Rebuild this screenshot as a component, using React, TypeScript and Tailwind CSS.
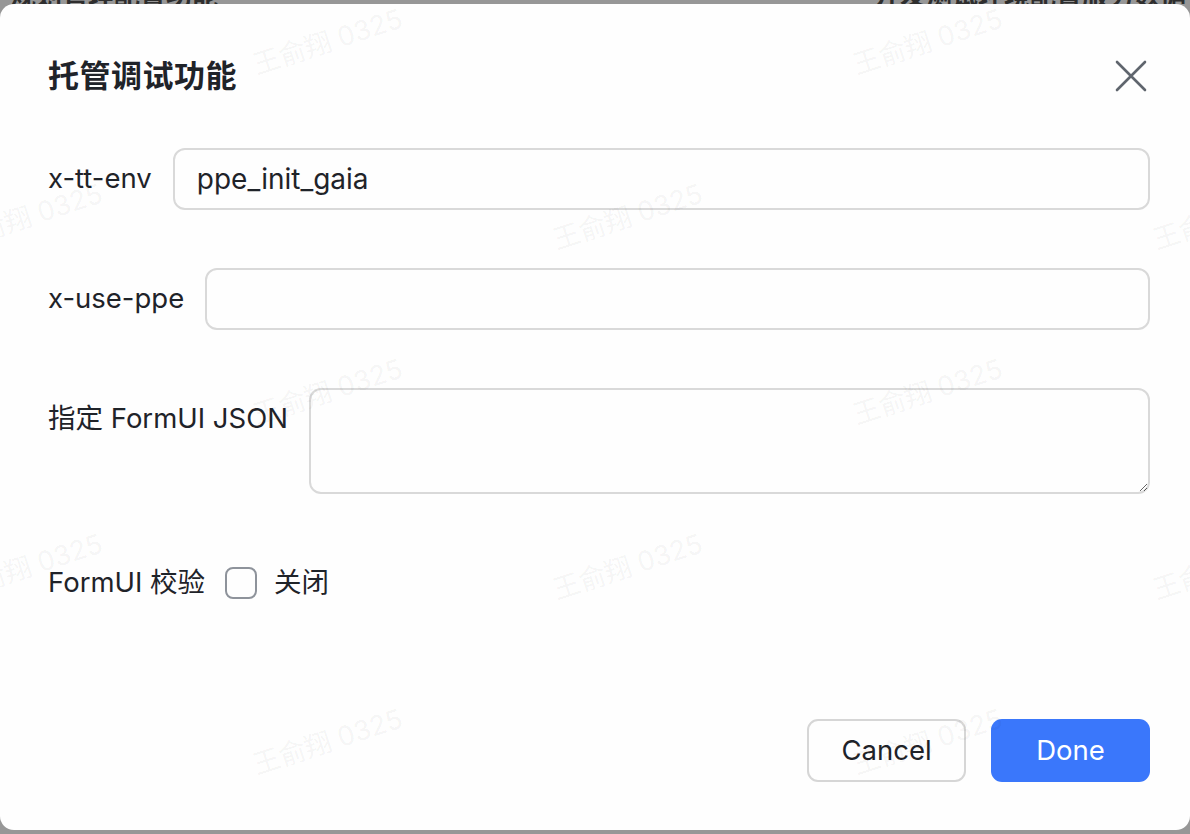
const WATERMARKS = [
  { x: 254, y: 18 },
  { x: 854, y: 18 },
  { x: -46, y: 193 },
  { x: 554, y: 193 },
  { x: 1154, y: 193 },
  { x: 254, y: 368 },
  { x: 854, y: 368 },
  { x: -46, y: 543 },
  { x: 554, y: 543 },
  { x: 1154, y: 543 },
  { x: 254, y: 718 },
  { x: 854, y: 718 },
];

const FONT = "font-['Inter','Noto_Sans_CJK_SC',sans-serif]";

const CloseIcon = () => (
  <svg width="32" height="32" viewBox="0 0 32 32" fill="none">
    <path
      d="M2 2L30 30M30 2L2 30"
      stroke="#5f656d"
      strokeWidth="2.6"
      strokeLinecap="round"
    />
  </svg>
);

const App = () => {
  return (
    <div
      className={`relative h-[834px] w-[1190px] overflow-hidden bg-[#979797] ${FONT}`}
    >
      {/* page behind the modal, only a sliver shows */}
      <div className="flex h-[4px] gap-8 overflow-hidden pl-[10px] text-[26px] font-semibold text-[#2e2e2e]">
        <span className="-mt-[24px] whitespace-nowrap">规划管理配置功能</span>
        <span className="-mt-[24px] h-[30px] w-[2px] bg-[#3b66c8]" />
        <span className="-mt-[24px] ml-[560px] h-[30px] w-[80px] bg-[#6b1a1a]" />
        <span className="-mt-[24px] whitespace-nowrap">
          开发测试环境配置服务数据管理
        </span>
      </div>

      <div className="relative flex h-[826px] flex-col overflow-hidden rounded-[14px] bg-[#fefefe] pr-10 pl-12 text-[#1f2329]">
        <div className="mt-[54px] flex h-[36px] items-center justify-between">
          <h2 className="text-[31px] font-bold leading-[36px] tracking-[0.5px]">
            托管调试功能
          </h2>
          <button type="button" className="mr-[3px]">
            <CloseIcon />
          </button>
        </div>

        <div className="mt-[54px] flex flex-col gap-[58px] text-[27.5px]">
          <div className="flex items-center gap-[21px]">
            <label className="whitespace-nowrap">x-tt-env</label>
            <input
              defaultValue="ppe_init_gaia"
              className="h-[62px] flex-1 rounded-[12px] border-2 border-[#d9d9d9] bg-transparent pl-[22px] text-[28px] text-[#1f2329] outline-none"
            />
          </div>

          <div className="flex items-center gap-[21px]">
            <label className="whitespace-nowrap">x-use-ppe</label>
            <input className="h-[62px] flex-1 rounded-[12px] border-2 border-[#d9d9d9] bg-transparent pl-[22px] text-[28px] outline-none" />
          </div>

          <div className="flex items-start gap-[21px]">
            <label className="flex h-[62px] items-center whitespace-nowrap">
              指定 FormUI JSON
            </label>
            <textarea className="h-[106px] flex-1 rounded-[12px] border-2 border-[#d9d9d9] bg-transparent px-[22px] py-[12px] outline-none" />
          </div>

          <div className="flex h-[62px] items-center">
            <label className="whitespace-nowrap">FormUI 校验</label>
            <span className="ml-[20px] h-[32px] w-[32px] rounded-[8px] border-2 border-[#8e939b]" />
            <span className="ml-[17px]">关闭</span>
          </div>
        </div>

        <div className="mt-auto flex justify-end gap-[25px] pb-[48px] text-[27.5px]">
          <button
            type="button"
            className="h-[63px] w-[159px] rounded-[11px] border-2 border-[#d6d6d6] text-[#1f2329]"
          >
            Cancel
          </button>
          <button
            type="button"
            className="h-[63px] w-[159px] rounded-[11px] bg-[#3a77fb] text-white"
          >
            Done
          </button>
        </div>

        {/* watermark layer */}
        <div className="pointer-events-none absolute inset-0">
          {WATERMARKS.map((w, i) => (
            <span
              key={i}
              className="absolute origin-left -rotate-[18deg] whitespace-nowrap text-[27px] text-black/[0.055]"
              style={{ left: w.x, top: w.y + 24 }}
            >
              王俞翔 0325
            </span>
          ))}
        </div>
      </div>
    </div>
  );
};

export default App;
